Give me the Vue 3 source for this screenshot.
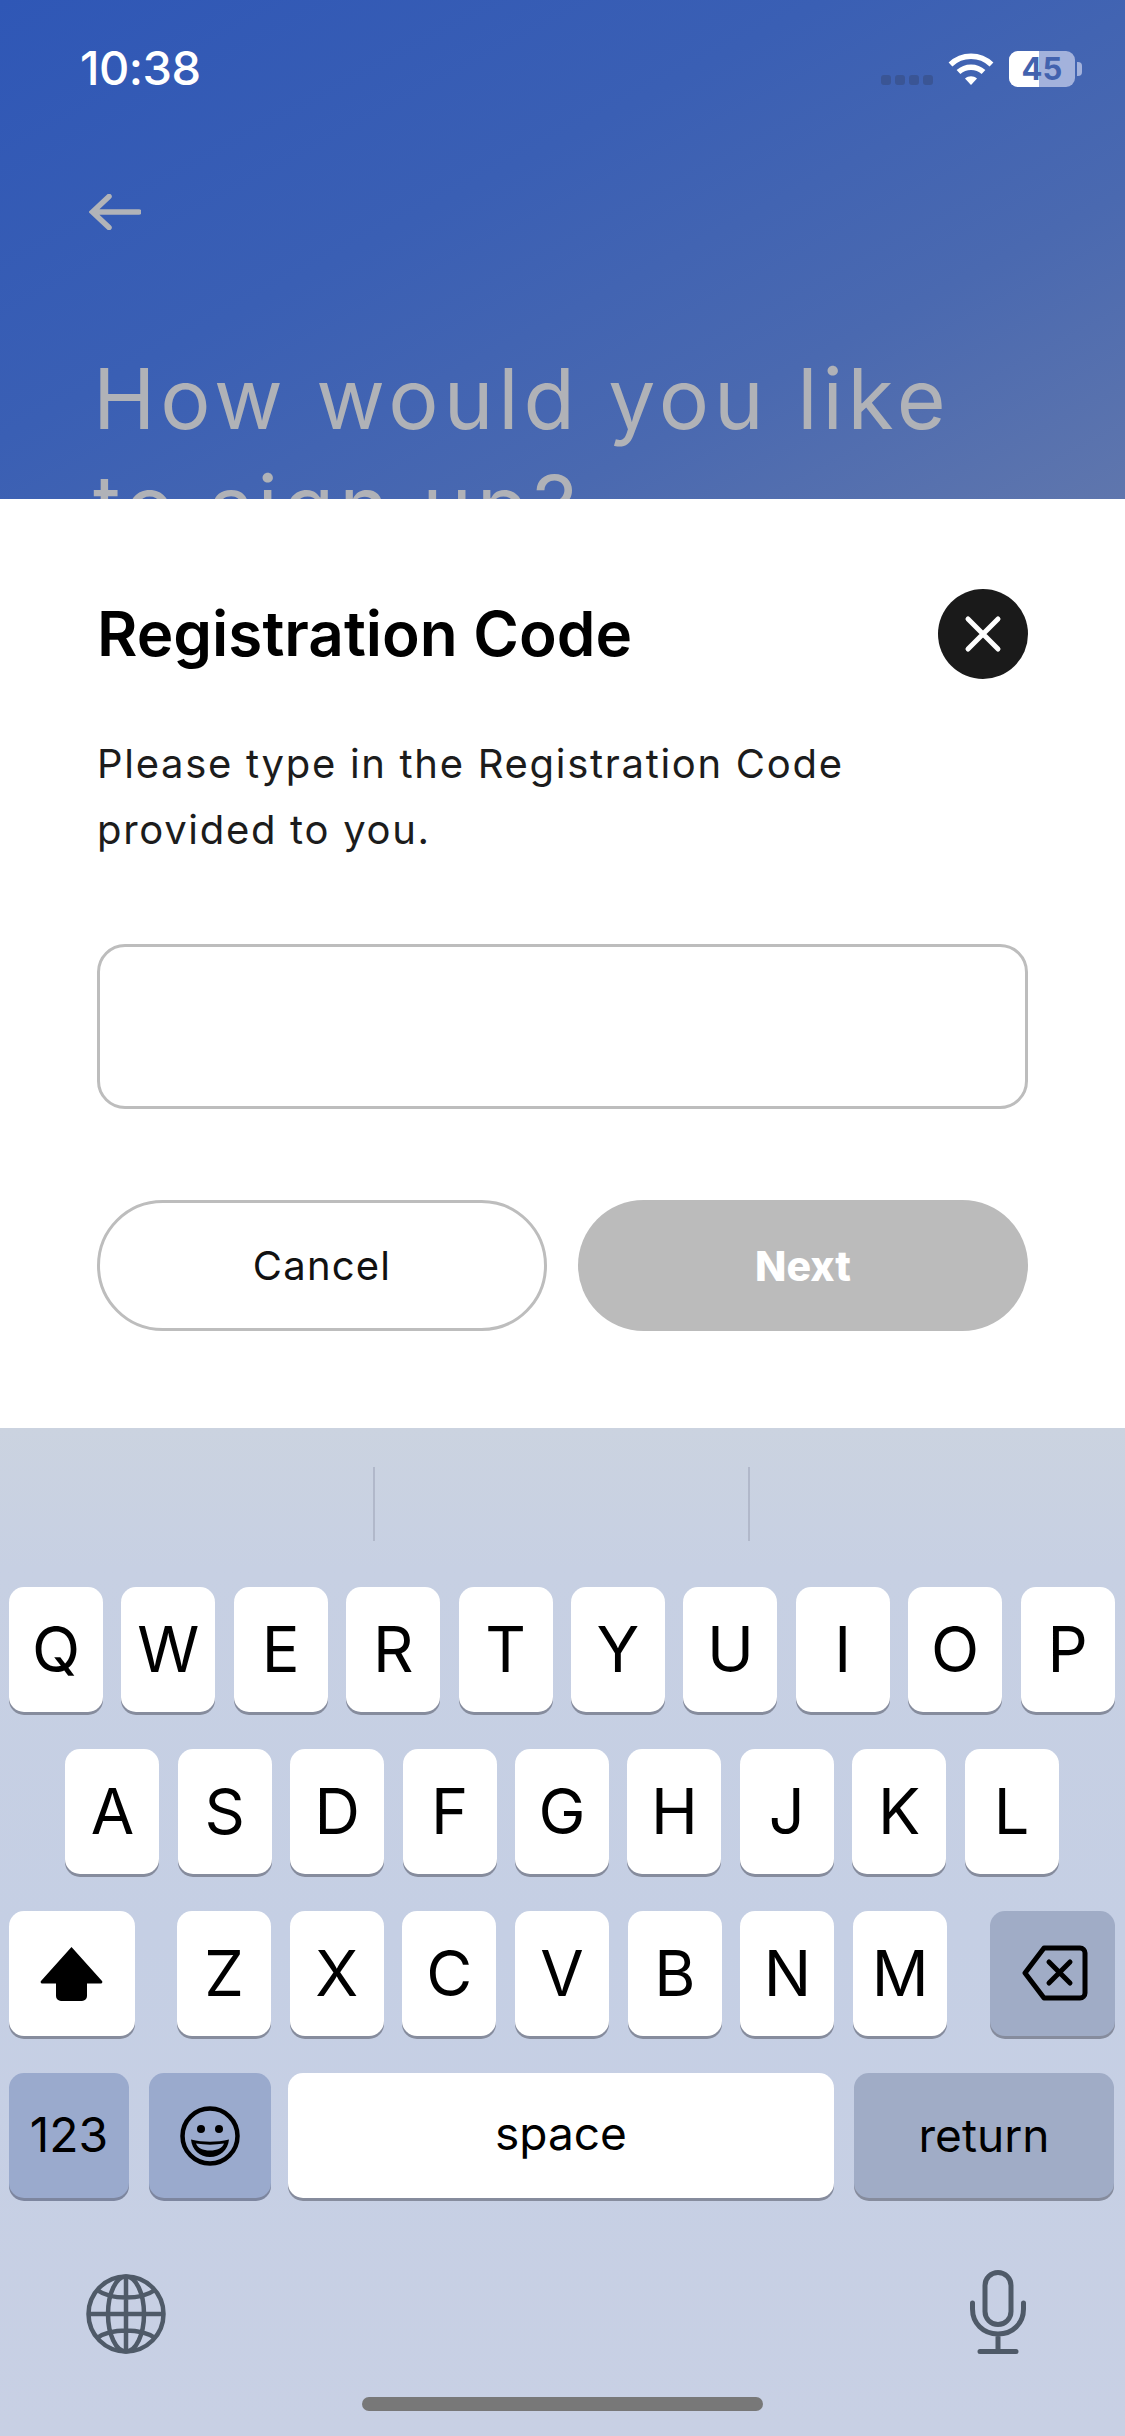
<template>
  <div class="screen">
    <!-- blurred page behind the sheet -->
    <div class="hero">
      <div class="status">
        <span class="time">10:38</span>
        <div class="status-icons">
          <div class="signal"><i v-for="n in 4" :key="n"></i></div>
          <svg class="wifi" width="46" height="33" viewBox="0 0 46 33">
            <path d="M2.500 12.500C14 1.500 32 1.500 43.500 12.500" fill="none" stroke="#fff" stroke-width="5.500" />
            <path d="M10.500 20C17.500 13.500 28.500 13.500 35.500 20" fill="none" stroke="#fff" stroke-width="5.500" />
            <path d="M17 26.500C20.500 23.500 25.500 23.500 29 26.500L23 33Z" fill="#fff" />
          </svg>
          <div class="battery">
            <div class="batt-body">
              <span class="batt-fill"></span>
              <span class="batt-num">45</span>
            </div>
            <span class="batt-nub"></span>
          </div>
        </div>
      </div>

      <svg class="back" width="52" height="36" viewBox="0 0 52 36">
        <path d="M50 18H4M20 2.500 3.500 18 20 33.500" fill="none" stroke="#b1b3b8" stroke-width="5.500" stroke-linecap="round" />
      </svg>

      <h1 class="hero-title">How would you like<br />to sign up?</h1>
    </div>

    <!-- bottom sheet -->
    <div class="sheet">
      <div class="sheet-hdr">
        <h2 class="sheet-title">Registration Code</h2>
        <button class="close-btn">
          <svg width="40" height="40" viewBox="0 0 40 40">
            <path d="M5 5 35 35M35 5 5 35" stroke="#fff" stroke-width="5" stroke-linecap="round" />
          </svg>
        </button>
      </div>
      <p class="sheet-text">Please type in the Registration Code<br />provided to you.</p>
      <div class="code-input"></div>
      <div class="sheet-actions">
        <button class="btn btn-cancel">Cancel</button>
        <button class="btn btn-next">Next</button>
      </div>
    </div>

    <!-- iOS keyboard -->
    <div class="keyboard">
      <div class="suggest"><i></i><i></i></div>
      <div class="rows">
        <div class="row">
          <div v-for="k in row1" :key="k" class="key">{{ k }}</div>
        </div>
        <div class="row row-center">
          <div v-for="k in row2" :key="k" class="key">{{ k }}</div>
        </div>
        <div class="row row-split">
          <div class="key key-shift">
            <svg width="63" height="55" viewBox="0 0 63 55">
              <path d="M31.500 1 62 35a1.500 1.500 0 0 1-1 2.500H47V50a5 5 0 0 1-5 5H21a5 5 0 0 1-5-5V37.500H2A1.500 1.500 0 0 1 1 35Z" fill="#000" />
            </svg>
          </div>
          <div class="letters">
            <div v-for="k in row3" :key="k" class="key">{{ k }}</div>
          </div>
          <div class="key key-fn key-del">
            <svg width="66" height="56" viewBox="0 0 66 56">
              <path d="M22 3H58a5 5 0 0 1 5 5V48a5 5 0 0 1-5 5H22L3 28Z" fill="none" stroke="#000" stroke-width="5" stroke-linejoin="round" />
              <path d="M27 17 48 38M48 17 27 38" stroke="#000" stroke-width="5" stroke-linecap="round" />
            </svg>
          </div>
        </div>
        <div class="row">
          <div class="key key-blue key-123">123</div>
          <div class="key key-blue key-emoji">
            <svg width="60" height="60" viewBox="0 0 60 60">
              <circle cx="30" cy="30" r="27.500" fill="none" stroke="#000" stroke-width="4.500" />
              <circle cx="21" cy="23" r="4" />
              <circle cx="39" cy="23" r="4" />
              <path d="M11 33.500C23 36.500 37 36.500 49 33.500 48 44 40 51 30 51S12 44 11 33.500Z" />
              <path d="M16 37.500C25 39 35 39 44 37.500 42.500 42 37 44.500 30 44.500S17.500 42 16 37.500Z" fill="#9aaacd" />
            </svg>
          </div>
          <div class="key key-space">space</div>
          <div class="key key-fn key-return">return</div>
        </div>
      </div>

      <div class="kb-bottom">
        <svg class="globe" width="80" height="80" viewBox="0 0 80 80" fill="none" stroke="#4f5a68" stroke-width="4.500">
          <circle cx="40" cy="40" r="37.500" />
          <ellipse cx="40" cy="40" rx="18" ry="37.500" />
          <path d="M40 2.500V77.500M2.500 40H77.500M11 16C25 26 55 26 69 16M11 64C25 54 55 54 69 64" />
        </svg>
        <svg width="56" height="84" viewBox="0 0 56 84" fill="none" stroke="#4f5a68" stroke-width="5" stroke-linecap="round">
          <rect x="15" y="2.500" width="26" height="52" rx="13" />
          <path d="M2.500 33V39C2.500 53 13 64 28 64S53.500 53 53.500 39V33M28 64V81M10 81.500H46" />
        </svg>
      </div>
      <div class="home-bar"></div>
    </div>
  </div>
</template>

<script setup>
const row1 = ['Q', 'W', 'E', 'R', 'T', 'Y', 'U', 'I', 'O', 'P']
const row2 = ['A', 'S', 'D', 'F', 'G', 'H', 'J', 'K', 'L']
const row3 = ['Z', 'X', 'C', 'V', 'B', 'N', 'M']
</script>

<style>
html, body { margin: 0; padding: 0; }
</style>

<style scoped>
.screen {
  display: flex;
  flex-direction: column;
  width: 1125px;
  height: 2436px;
  overflow: hidden;
  font-family: Inter, "Noto Sans", sans-serif;
  color: #000;
}

/* hero */
.hero {
  height: 499px;
  flex-shrink: 0;
  overflow: hidden;
  padding: 0 0 0 96px;
  box-sizing: border-box;
  background: linear-gradient(152deg, #2f57b6 0%, #3a5fb4 40%, #4a69b0 72%, #5f76ad 100%);
}

.status {
  display: flex;
  justify-content: space-between;
  align-items: flex-start;
  height: 100px;
  margin-left: -16px;
  padding-right: 43px;
}
.time {
  margin-top: 41px;
  font-size: 47px;
  line-height: 54px;
  font-weight: 500;
  color: #fff;
  letter-spacing: -0.5px;
}
.status-icons {
  display: flex;
  align-items: flex-start;
  margin-top: 51px;
}
.signal {
  display: flex;
  gap: 4px;
  margin-top: 24px;
  margin-right: 15px;
}
.signal i {
  display: block;
  width: 10px;
  height: 10px;
  border-radius: 3px;
  background: #3a5595;
}
.wifi { margin-top: 1px; margin-right: 15px; }
.battery { display: flex; align-items: center; height: 36px; }
.batt-body {
  position: relative;
  width: 66px;
  height: 36px;
  border-radius: 9px;
  overflow: hidden;
  background: #a3b2dc;
  text-align: center;
}
.batt-fill {
  position: absolute;
  left: 0;
  top: 0;
  bottom: 0;
  width: 30px;
  background: #fff;
}
.batt-num {
  position: relative;
  font-size: 31px;
  line-height: 36px;
  font-weight: 700;
  color: #4262ae;
}
.batt-nub {
  width: 5px;
  height: 14px;
  margin-left: 2px;
  border-radius: 0 4px 4px 0;
  background: #a3b2dc;
}

.back {
  display: block;
  margin: 94px 0 0 -7px;
}
.hero-title {
  margin: 115px 0 0 -3px;
  font-size: 84px;
  line-height: 107px;
  font-weight: 400;
  letter-spacing: 4.900px;
  white-space: nowrap;
  color: #b0b2b7;
}

/* sheet */
.sheet {
  height: 929px;
  flex-shrink: 0;
  box-sizing: border-box;
  padding: 90px 97px 0;
  background: #fff;
}
.sheet-hdr {
  display: flex;
  justify-content: space-between;
  align-items: center;
  height: 90px;
}
.sheet-title {
  margin: 0;
  font-size: 62px;
  line-height: 70px;
  font-weight: 600;
}
.close-btn {
  display: flex;
  align-items: center;
  justify-content: center;
  width: 90px;
  height: 90px;
  margin: 0;
  padding: 0;
  border: none;
  border-radius: 50%;
  background: #1a1a1a;
}
.sheet-text {
  margin: 52px 0 0;
  font-size: 40px;
  line-height: 66px;
  font-weight: 400;
  letter-spacing: 1.700px;
  color: #1c1c1c;
}
.code-input {
  height: 165px;
  margin-top: 81px;
  box-sizing: border-box;
  border: 3px solid #bdbdbd;
  border-radius: 28px;
  background: #fff;
}
.sheet-actions {
  display: flex;
  gap: 31px;
  margin-top: 91px;
}
.btn {
  flex: 0 0 450px;
  height: 131px;
  margin: 0;
  padding: 0;
  border-radius: 66px;
  font-family: inherit;
  font-size: 40px;
  box-sizing: border-box;
}
.btn-cancel {
  border: 3px solid #bdbdbd;
  background: #fff;
  color: #111;
  letter-spacing: 1.200px;
}
.btn-next {
  border: none;
  background: #bbbbbb;
  color: #fff;
  font-size: 41px;
  font-weight: 800;
}

/* keyboard */
.keyboard {
  position: relative;
  flex: 1;
  background: linear-gradient(180deg, #cbd3e0 0%, #c7d0e3 14%, #c5cfe4 50%, #c8d0e4 100%);
}
.suggest {
  display: flex;
  justify-content: center;
  gap: 373px;
  height: 159px;
  box-sizing: border-box;
  padding: 39px 3px 46px 0;
}
.suggest i {
  display: block;
  width: 2px;
  background: #b1b8ca;
}
.rows {
  display: flex;
  flex-direction: column;
  gap: 37px;
  padding: 0 10px 0 9px;
}
.row {
  display: flex;
  gap: 18.400px;
}
.row-center { justify-content: center; }
.row-split { justify-content: space-between; gap: 0; }
.letters { display: flex; gap: 18.700px; margin-left: 42px; margin-right: 43px; }
.key {
  display: flex;
  align-items: center;
  justify-content: center;
  width: 94px;
  height: 125px;
  flex-shrink: 0;
  border-radius: 15px;
  background: #fff;
  box-shadow: 0 3px 0 #868c9d;
  font-size: 63px;
  line-height: 1;
  box-sizing: border-box;
}
.key-shift { width: 126px; padding-right: 2px; }
.key-fn { background: #a0acc6; }
.key-blue { background: #9aaacd; box-shadow: 0 3px 0 #7d869f; }
.key-del { width: 125px; padding: 0 0 2px 4px; }
.key-123 { width: 120px; font-size: 48px; padding-bottom: 2px; }
.key-emoji { width: 122px; margin-left: 1.600px; }
.key-space {
  width: 546px;
  margin-left: -1.400px;
  font-size: 46px;
  padding-bottom: 6px;
}
.key-return { width: 260px; margin-left: 1.600px; font-size: 46px; padding-bottom: 2px; }

.kb-bottom {
  display: flex;
  justify-content: space-between;
  align-items: center;
  padding: 72px 99px 0 86px;
}
.globe { margin-top: 4px; }
.home-bar {
  position: absolute;
  left: 362px;
  bottom: 25px;
  width: 401px;
  height: 14px;
  border-radius: 7px;
  background: #787878;
}
</style>
